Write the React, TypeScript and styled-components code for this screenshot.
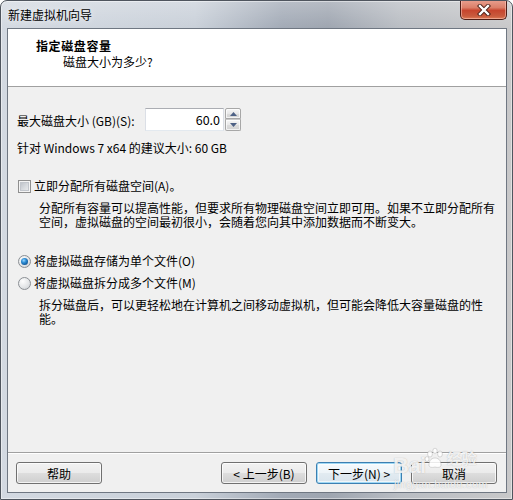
import React from "react";
import styled, { createGlobalStyle, css } from "styled-components";

const GlobalStyle = createGlobalStyle`
  html, body { margin: 0; padding: 0; background: #ffffff; }
  body {
    font-family: "Noto Sans CJK SC", "Noto Sans", sans-serif;
    font-size: 12px;
    color: #000;
    overflow: hidden;
  }
  #root { width: 513px; height: 500px; }
`;

const Window = styled.div`
  position: relative;
  box-sizing: border-box;
  width: 513px;
  height: 500px;
  border: 1px solid #4f555e;
  border-radius: 7px 7px 0 0;
  padding: 0 5px 6px 6px;
  display: flex;
  flex-direction: column;
  background:
    linear-gradient(180deg, rgba(255,255,255,0.25) 0px, rgba(255,255,255,0) 28px),
    linear-gradient(90deg, #d3d9e1 0%, #c9d0d9 38%, #a2aab6 55%, #9ea5b0 64%, #b9bdc3 78%, #c8c8c9 100%);
  box-shadow: inset 0 0 0 1px rgba(255,255,255,0.45);
  overflow: hidden;
`;

const TitleBar = styled.div`
  height: 27px;
  flex: 0 0 auto;
  display: flex;
  align-items: flex-start;
  justify-content: space-between;
`;

const Title = styled.div`
  padding: 6px 0 0 1px;
  font-size: 12px;
  line-height: 16px;
  color: #000;
  text-shadow: 0 0 6px rgba(255,255,255,0.9);
`;

const CloseButton = styled.div`
  box-sizing: border-box;
  width: 47px;
  height: 20px;
  margin: -1px 0 0 0;
  border: 1px solid #4e1d16;
  border-top: none;
  border-radius: 0 0 5px 5px;
  background: linear-gradient(180deg, #e9a090 0%, #db7f69 40%, #c7452e 55%, #c95b3e 85%, #e07b55 100%);
  box-shadow: inset 0 0 0 1px rgba(255,210,200,0.5);
  display: flex;
  align-items: center;
  justify-content: center;
`;

const Client = styled.div`
  flex: 1 1 auto;
  display: flex;
  flex-direction: column;
  border: 1px solid #6f7782;
  background: #f0f0f0;
`;

const Header = styled.div`
  box-sizing: border-box;
  height: 58px;
  flex: 0 0 auto;
  background: #ffffff;
  border-bottom: 1px solid #a0a0a0;
  padding-top: 9px;
`;

const HeaderTitle = styled.div`
  padding-left: 28px;
  font-weight: bold;
  line-height: 16px;
  letter-spacing: 0.6px;
`;

const HeaderSub = styled.div`
  padding-left: 55px;
  line-height: 16px;
`;

const Body = styled.div`
  flex: 1 1 auto;
  padding: 21px 9px 0 9px;
  display: flex;
  flex-direction: column;
  align-items: flex-start;
`;

const SizeRow = styled.div`
  display: flex;
  align-items: center;
  height: 23px;
`;

const FieldLabel = styled.div`
  width: 128px;
  padding-top: 3px;
  line-height: 16px;
  white-space: nowrap;
`;

const SpinBox = styled.div`
  box-sizing: border-box;
  width: 79px;
  height: 23px;
  background: #fff;
  border: 1px solid #abadb3;
  border-left-color: #dbdfe6;
  border-right-color: #dbdfe6;
  border-bottom-color: #e3e9ef;
  text-align: right;
  padding: 3px 3px 0 0;
  line-height: 16px;
  font-size: 12.5px;
`;

const Spinner = styled.div`
  margin-left: 1px;
  width: 16px;
  height: 23px;
  display: flex;
  flex-direction: column;
`;

const SpinButton = styled.div<{ $down?: boolean }>`
  box-sizing: border-box;
  height: ${(p) => (p.$down ? 12 : 11)}px;
  border: 1px solid #a7a7a7;
  border-radius: ${(p) => (p.$down ? "0 0 2px 2px" : "2px 2px 0 0")};
  ${(p) =>
    p.$down &&
    css`
      border-top-color: #c8c8c8;
    `}
  background: linear-gradient(180deg, #f6f6f6 0%, #e8e8e8 50%, #dcdcdc 51%, #d2d2d2 100%);
  box-shadow: inset 0 0 0 1px rgba(255,255,255,0.7);
  display: flex;
  align-items: center;
  justify-content: center;
`;

const Hint = styled.div`
  margin-top: 9px;
  line-height: 16px;
`;

const OptionRow = styled.div<{ $gap: number }>`
  margin-top: ${(p) => p.$gap}px;
  display: flex;
  align-items: center;
  line-height: 16px;
`;

const CheckBox = styled.div`
  box-sizing: border-box;
  width: 13px;
  height: 13px;
  margin-left: 1px;
  margin-right: 3px;
  border: 1px solid #8f8f8f;
  background: linear-gradient(135deg, #b4b9c0 0%, #d8dbdf 55%, #f1f1f2 100%);
  box-shadow: inset 0 0 0 1px #f4f4f4, inset 0 0 0 2px #c2c6cc;
`;

const Radio = styled.div<{ $checked?: boolean }>`
  box-sizing: border-box;
  width: 13px;
  height: 13px;
  margin-left: 1px;
  margin-right: 3px;
  border-radius: 50%;
  border: 1px solid #8b8f94;
  background: radial-gradient(circle at 35% 30%, #fdfdfd 0%, #e4e6e8 55%, #c8ccd1 100%);
  display: flex;
  align-items: center;
  justify-content: center;
  &::after {
    content: "";
    display: ${(p) => (p.$checked ? "block" : "none")};
    width: 7px;
    height: 7px;
    border-radius: 50%;
    background: radial-gradient(circle at 40% 35%, #9bd6ff 0%, #2f8fd6 35%, #0d4f8f 80%, #0a3a6a 100%);
  }
`;

const Desc = styled.div<{ $gap: number }>`
  margin-top: ${(p) => p.$gap}px;
  margin-left: 22px;
  line-height: 14px;
`;

const Line = styled.span`
  display: block;
  white-space: nowrap;
`;

const Footer = styled.div`
  flex: 0 0 auto;
  display: flex;
  align-items: center;
  gap: 9px;
  padding: 9px 9px 8px 8px;
  border-top: 1px solid #a0a0a0;
  box-shadow: inset 0 1px 0 #ffffff;
`;

const Spacer = styled.div`
  flex: 1 1 auto;
`;

const Button = styled.div<{ $default?: boolean }>`
  box-sizing: border-box;
  width: 86px;
  height: 22px;
  border: 1px solid #707070;
  border-radius: 3px;
  background: linear-gradient(180deg, #f2f2f2 0%, #ebebeb 48%, #dddddd 52%, #cfcfcf 100%);
  box-shadow: inset 0 0 0 1px rgba(255,255,255,0.75);
  display: flex;
  align-items: center;
  justify-content: center;
  line-height: 16px;
  padding-top: 1px;
  white-space: nowrap;
  ${(p) =>
    p.$default &&
    css`
      border-color: #3c7fb1;
      background: linear-gradient(180deg, #f6fafd 0%, #eef4f8 48%, #e2ebf1 52%, #d9e4ec 100%);
      box-shadow: inset 0 0 0 1px #9fd8f5, inset 0 0 0 2px rgba(255,255,255,0.6);
    `}
`;

const Watermark = styled.div`
  position: absolute;
  left: 392px;
  top: 444px;
  width: 96px;
  height: 50px;
  pointer-events: none;
  color: rgba(255,255,255,0.82);
  text-shadow: 0 0 1px rgba(120,120,120,0.55);
  font-family: "Liberation Sans", Arial, sans-serif;
`;

const WmTop = styled.div`
  display: flex;
  align-items: flex-end;
  height: 32px;
`;

const WmBai = styled.span`
  font-size: 22px;
  font-weight: bold;
  line-height: 22px;
  letter-spacing: -0.5px;
`;

const WmJing = styled.span`
  font-family: "Noto Sans CJK SC", sans-serif;
  font-size: 15px;
  font-weight: bold;
  line-height: 18px;
  margin-left: 1px;
  margin-bottom: 10px;
`;

const WmUrl = styled.div`
  font-size: 11px;
  line-height: 12px;
  margin-top: 1px;
  padding-left: 1px;
  letter-spacing: 0.3px;
`;

const Paw = () => (
  <svg width="22" height="22" viewBox="0 0 22 22" style={{ marginBottom: 8, marginLeft: -2 }}>
    <g fill="rgba(255,255,255,0.85)" stroke="rgba(120,120,120,0.45)" strokeWidth="0.6">
      <ellipse cx="6" cy="7" rx="2.4" ry="3" />
      <ellipse cx="11" cy="4" rx="2.2" ry="2.8" />
      <ellipse cx="16" cy="7" rx="2.4" ry="3" />
      <ellipse cx="3" cy="12" rx="2" ry="2.4" />
      <path d="M5 18 C5 13 8 11 11 11 C14 11 17 13 17 18 C17 20 15 21 11 20 C7 21 5 20 5 18 Z" />
    </g>
  </svg>
);

const CloseIcon = () => (
  <svg width="14" height="12" viewBox="0 0 14 12">
    <path d="M3 2 L11 10 M11 2 L3 10" stroke="#4a1e16" strokeWidth="4.2" strokeLinecap="square" />
    <path d="M3 2 L11 10 M11 2 L3 10" stroke="#ffffff" strokeWidth="2.4" strokeLinecap="square" />
  </svg>
);

const Arrow = ({ down }: { down?: boolean }) => (
  <svg width="7" height="4" viewBox="0 0 7 4">
    <path d={down ? "M0 0 L7 0 L3.5 4 Z" : "M0 4 L7 4 L3.5 0 Z"} fill="#4d6185" />
  </svg>
);

export default function App() {
  return (
    <>
      <GlobalStyle />
      <Window>
        <TitleBar>
          <Title>新建虚拟机向导</Title>
          <CloseButton>
            <CloseIcon />
          </CloseButton>
        </TitleBar>
        <Client>
          <Header>
            <HeaderTitle>指定磁盘容量</HeaderTitle>
            <HeaderSub>磁盘大小为多少?</HeaderSub>
          </Header>
          <Body>
            <SizeRow>
              <FieldLabel>最大磁盘大小 (GB)(S):</FieldLabel>
              <SpinBox>60.0</SpinBox>
              <Spinner>
                <SpinButton>
                  <Arrow />
                </SpinButton>
                <SpinButton $down>
                  <Arrow down />
                </SpinButton>
              </Spinner>
            </SizeRow>
            <Hint>针对 Windows 7 x64 的建议大小: 60 GB</Hint>
            <OptionRow $gap={22}>
              <CheckBox />
              <span>立即分配所有磁盘空间(A)。</span>
            </OptionRow>
            <Desc $gap={7}>
              <Line>分配所有容量可以提高性能，但要求所有物理磁盘空间立即可用。如果不立即分配所有</Line>
              <Line>空间，虚拟磁盘的空间最初很小，会随着您向其中添加数据而不断变大。</Line>
            </Desc>
            <OptionRow $gap={24}>
              <Radio $checked />
              <span>将虚拟磁盘存储为单个文件(O)</span>
            </OptionRow>
            <OptionRow $gap={6}>
              <Radio />
              <span>将虚拟磁盘拆分成多个文件(M)</span>
            </OptionRow>
            <Desc $gap={7}>
              <Line>拆分磁盘后，可以更轻松地在计算机之间移动虚拟机，但可能会降低大容量磁盘的性</Line>
              <Line>能。</Line>
            </Desc>
          </Body>
          <Footer>
            <Button>帮助</Button>
            <Spacer />
            <Button>&lt; 上一步(B)</Button>
            <Button $default>下一步(N) &gt;</Button>
            <Button>取消</Button>
          </Footer>
        </Client>
        <Watermark>
          <WmTop>
            <WmBai>Bai</WmBai>
            <Paw />
            <WmJing>经验</WmJing>
          </WmTop>
          <WmUrl>jingyan.baidu.com</WmUrl>
        </Watermark>
      </Window>
    </>
  );
}
